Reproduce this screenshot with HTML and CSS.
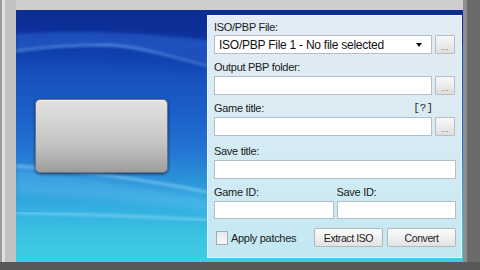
FILE: index.html
```html
<!DOCTYPE html>
<html lang="en">
<head>
    <meta charset="UTF-8">
    <meta name="viewport" content="width=device-width, initial-scale=1.0">
    <title>PSP ISO to PBP</title>
    <link rel="stylesheet" href="styles.css">
</head>
<body>
    <div class="frame">
        <div class="screen">
            <!-- Background waves -->
            <svg class="waves" viewBox="0 0 447 252" preserveAspectRatio="none">
                <defs>
                    <filter id="soft"><feGaussianBlur stdDeviation="1.6"/></filter>
                    <filter id="softer"><feGaussianBlur stdDeviation="3"/></filter>
                </defs>
                <path d="M0,0 H447 V30 C 380,30 300,24 191,30 C 140,28 90,22 0,24 Z" fill="#082c92" opacity="0.5" filter="url(#softer)"/>
                <path d="M0,24 C 60,20 120,22 191,30 C 260,26 360,30 447,34 V60 C 300,58 240,58 191,56 C 150,46 110,36 80,36 C 50,36 20,38 0,41 Z" fill="#3a78e0" opacity="0.38" filter="url(#soft)"/>
                <path d="M0,41 C 30,37 60,35 90,35 C 125,36 160,48 191,56" stroke="#8fc0ff" stroke-width="2" fill="none" opacity="0.6" filter="url(#soft)"/>
                <path d="M0,42 C 40,46 90,50 191,66 L191,40 Z" fill="#0b3aa8" opacity="0.25" filter="url(#softer)"/>
                <path d="M0,156 C 60,160 120,168 191,182" stroke="#bfefff" stroke-width="2.5" fill="none" opacity="0.5" filter="url(#soft)"/>
                <path d="M0,158 C 60,166 120,176 191,188 L191,200 C 120,192 60,186 0,184 Z" fill="#8fe0ff" opacity="0.2" filter="url(#softer)"/>
                <path d="M0,203 C 60,204 120,206 191,210" stroke="#c8f4ff" stroke-width="2" fill="none" opacity="0.5" filter="url(#soft)"/>
            </svg>

            <!-- Icon preview -->
            <div class="preview">
                <div class="icon-card"></div>
            </div>

            <!-- Form panel -->
            <form class="panel">
                <div class="field first">
                    <div class="lbl">ISO/PBP File:</div>
                    <div class="row">
                        <div class="select">
                            <span>ISO/PBP File 1 - No file selected</span>
                            <span class="caret"></span>
                        </div>
                        <button type="button" class="browse">...</button>
                    </div>
                </div>

                <div class="field">
                    <div class="lbl">Output PBP folder:</div>
                    <div class="row">
                        <input class="text" type="text">
                        <button type="button" class="browse">...</button>
                    </div>
                </div>

                <div class="field">
                    <div class="lbl split"><span>Game title:</span><span class="help">[?]</span></div>
                    <div class="row">
                        <input class="text" type="text">
                        <button type="button" class="browse">...</button>
                    </div>
                </div>

                <div class="field spaced">
                    <div class="lbl">Save title:</div>
                    <input class="text" type="text">
                </div>

                <div class="field pair">
                    <div>
                        <div class="lbl">Game ID:</div>
                        <input class="text short" type="text">
                    </div>
                    <div>
                        <div class="lbl">Save ID:</div>
                        <input class="text short" type="text">
                    </div>
                </div>

                <div class="actions">
                    <label class="check"><span class="box"></span>Apply patches</label>
                    <div class="buttons">
                        <button type="button" class="btn">Extract ISO</button>
                        <button type="button" class="btn">Convert</button>
                    </div>
                </div>
            </form>
        </div>
    </div>
</body>
</html>
```

FILE: styles.css
```css
* {
    margin: 0;
    padding: 0;
    box-sizing: border-box;
}

body {
    width: 480px;
    height: 270px;
    overflow: hidden;
    background: #5a5a5a;
    font-family: 'Liberation Sans', Arial, sans-serif;
    color: #1c1c1c;
}

/* Outer grey window frame */
.frame {
    width: 480px;
    height: 270px;
    padding: 10px 17px 8px 16px;
    background:
        linear-gradient(90deg, #9a9a9a 0 2px, #e0e0e0 2px 5px, #c2c2c2 5px 16px) left top / 16px 262px no-repeat,
        linear-gradient(90deg, #8e8e8e 0 4px, #6b6b6b 4px) right top / 17px 262px no-repeat,
        linear-gradient(#cecece 0 10px, #c4c4c4 10px 262px, #585858 262px);
}

.screen {
    position: relative;
    display: flex;
    height: 252px;
    overflow: hidden;
    background: linear-gradient(180deg, #0a2f96 0%, #0e3ba8 14%, #1751be 26%, #1b5fc8 40%, #2271d1 54%, #2a8fd8 66%, #33ade0 78%, #3ac3e3 90%, #3ecce3 100%);
}

.waves {
    position: absolute;
    inset: 0;
    width: 100%;
    height: 100%;
}

/* Left side */
.preview {
    position: relative;
    flex: 1;
    display: flex;
    align-items: center;
    padding-left: 19px;
}

.icon-card {
    width: 133px;
    height: 74px;
    border-radius: 5px;
    border: 1px solid #6d7480;
    background: linear-gradient(180deg, #e2e2e2 0%, #d2d2d2 35%, #c0c0c0 65%, #a9a9a9 88%, #9c9c9c 100%);
    box-shadow: 0 1px 3px rgba(0, 10, 50, 0.7), inset 0 1px 0 rgba(255, 255, 255, 0.6);
}

/* Right panel */
.panel {
    position: relative;
    width: 255px;
    margin: 5px 1px 4px 0;
    padding: 0 6px 0 7px;
    background: linear-gradient(180deg, #e3ecf4 0%, #dbebf3 40%, #cdeaf3 75%, #c2e8f1 100%);
    box-shadow: inset 0 0 0 1px rgba(255, 255, 255, 0.55);
    font-size: 11px;
    letter-spacing: -0.3px;
}

.field {
    margin-top: 2px;
}

.field.first {
    margin-top: 0;
}

.field.spaced {
    margin-top: 4px;
}

.lbl {
    height: 20px;
    display: flex;
    align-items: flex-end;
    padding-bottom: 2px;
    line-height: 13px;
    color: #1a1a1a;
}

.field.first .lbl {
    padding-bottom: 1px;
}

.lbl.split {
    justify-content: space-between;
    padding-right: 23px;
}

.help {
    font-family: 'Liberation Mono', monospace;
    font-size: 11px;
    letter-spacing: 0;
    color: #2a2a2a;
}

.row {
    display: flex;
    gap: 3px;
    padding-right: 1px;
}

.select,
.text {
    flex: 1;
    height: 19px;
    background: #fff;
    border: 1px solid #b2bfca;
}

.text {
    display: block;
    width: 100%;
    outline: none;
}

.row .text {
    width: auto;
}

.text.short {
    height: 18px;
}

.select {
    display: flex;
    align-items: center;
    justify-content: space-between;
    padding: 0 9px 0 4px;
    font-size: 12px;
    letter-spacing: -0.25px;
    color: #111;
}

.caret {
    width: 0;
    height: 0;
    border-left: 3.5px solid transparent;
    border-right: 3.5px solid transparent;
    border-top: 4px solid #111;
}

.browse {
    width: 20px;
    height: 19px;
    border: 1px solid #b9bcc0;
    border-radius: 1px;
    background: linear-gradient(180deg, #f8f8f8 0%, #ececec 50%, #dedede 100%);
    font-family: 'Liberation Sans', Arial, sans-serif;
    font-size: 9px;
    line-height: 9px;
    padding-top: 5px;
    color: #7a7a7a;
}

.pair {
    display: grid;
    grid-template-columns: 1fr 1fr;
    gap: 3px;
}

.actions {
    display: flex;
    align-items: center;
    margin-top: 9px;
    height: 19px;
}

.check {
    display: flex;
    align-items: center;
    gap: 3px;
    padding-left: 2px;
    font-size: 11px;
    color: #1a1a1a;
}

.box {
    width: 12px;
    height: 14px;
    border: 1px solid #a3acb4;
    background: linear-gradient(180deg, #e6e9ec, #f8f8f8);
}

.buttons {
    display: flex;
    gap: 4px;
    margin-left: auto;
}

.btn {
    width: 69px;
    height: 19px;
    border: 1px solid #b4b7ba;
    border-radius: 2px;
    background: linear-gradient(180deg, #fbfbfb 0%, #f0f0f0 50%, #e2e2e2 100%);
    font-family: 'Liberation Sans', Arial, sans-serif;
    font-size: 10.5px;
    letter-spacing: -0.4px;
    color: #1a1a1a;
}
```
